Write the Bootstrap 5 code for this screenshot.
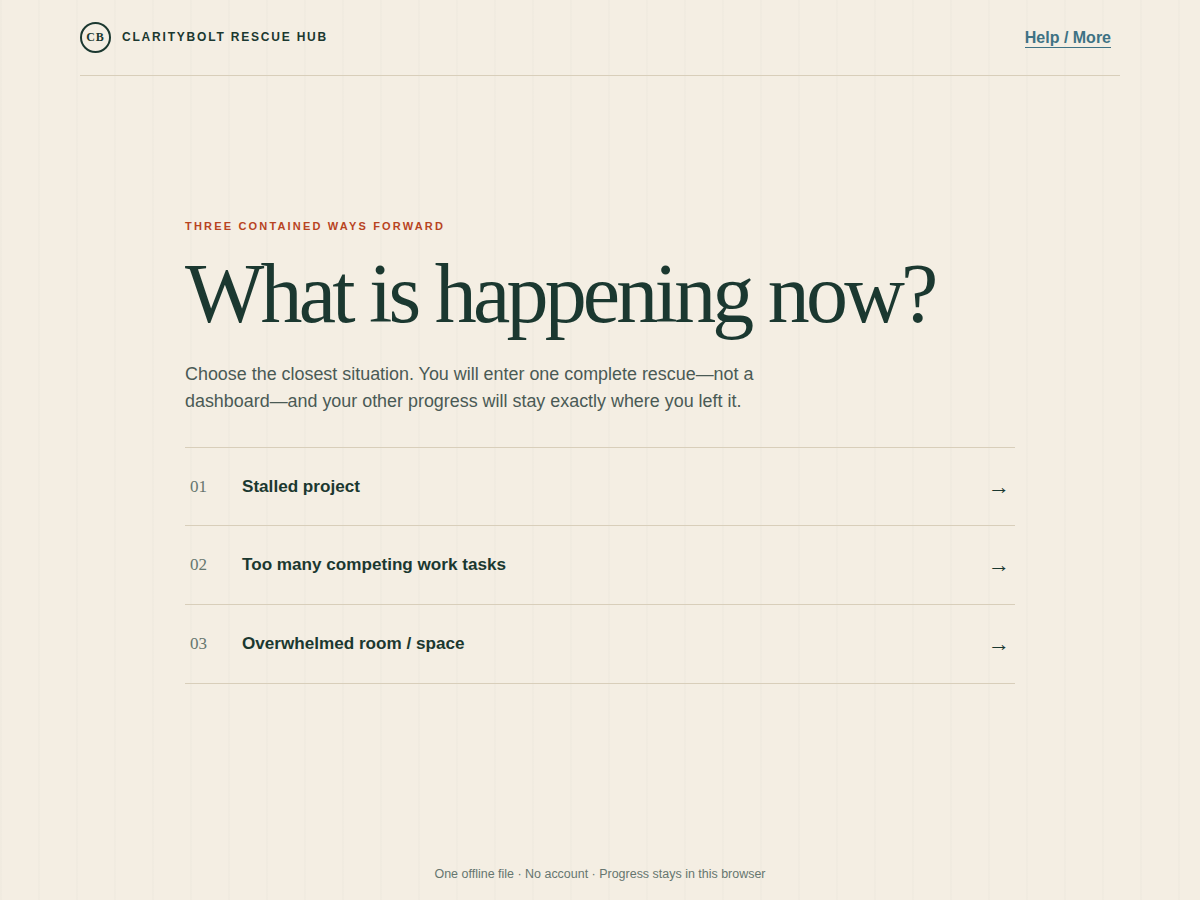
<!DOCTYPE html>
<html lang="en">
<head>
<meta charset="utf-8">
<title>ClarityBolt Rescue Hub</title>
<link href="https://cdn.jsdelivr.net/npm/bootstrap@5.3.0/dist/css/bootstrap.min.css" rel="stylesheet">
<style>
html,body{height:100%}
body{background-color:#f4eee3;background-image:repeating-linear-gradient(90deg,rgba(27,58,50,.016) 0 2px,transparent 2px 38px);font-family:"Liberation Sans",Arial,sans-serif;color:#1b3830}
.shell{height:900px;padding:0 80px;overflow:hidden}
.topbar{height:76px;border-bottom:1px solid #d8ceba;padding-bottom:22px}
.seal{width:31px;height:31px;border:2px solid #1b3830;border-radius:50%;font:700 12px/1 "Liberation Serif",serif;letter-spacing:1px;padding-bottom:2px}
.brandname{font-size:12px;font-weight:700;letter-spacing:1.8px;margin-left:11px;margin-top:-2px}
.helplink{font-size:16px;font-weight:700;color:#3e7284;text-decoration:none;border-bottom:1px solid #3e7284;line-height:18px;margin-right:9px;margin-bottom:5px}
.stage{width:830px;margin:0 auto;padding-top:144px}
.kicker{font-size:11px;font-weight:700;letter-spacing:2.18px;color:#b8441f;line-height:13px;margin-bottom:19px}
.headline{font:400 84px/84px "Liberation Serif",serif;letter-spacing:-3.78px;margin:0 0 25px;color:#1b3830}
.intro{font-size:17.92px;line-height:26.88px;color:#4a5a55;margin:0 0 32px;max-width:620px}
.rescue{border-top:1px solid #d8ceba}
.rescue-row{height:78.67px;border-bottom:1px solid #d8ceba;padding:0 5px;color:#1b3830;text-decoration:none}
.rowno{font:400 17px/1 "Liberation Serif",serif;color:#66766f;width:52px;margin-top:-1px}
.rowlabel{font-size:17.12px;font-weight:700;margin-top:-.34px}
.rowarrow{font:400 22px/1 "Liberation Serif",serif;margin-left:auto}
.foot{position:absolute;left:0;right:0;top:867px;text-align:center;font-size:12.48px;line-height:15px;color:#66766f}
</style>
</head>
<body>
<div class="shell">
  <header class="topbar d-flex justify-content-between align-items-end">
    <div class="d-flex align-items-center">
      <span class="seal d-flex align-items-center justify-content-center">CB</span>
      <span class="brandname">CLARITYBOLT RESCUE HUB</span>
    </div>
    <a class="helplink" href="#">Help / More</a>
  </header>
  <main class="stage">
    <div class="kicker">THREE CONTAINED WAYS FORWARD</div>
    <h1 class="headline">What is happening now?</h1>
    <p class="intro">Choose the closest situation. You will enter one complete rescue—not a dashboard—and your other progress will stay exactly where you left it.</p>
    <div class="rescue">
      <a class="rescue-row d-flex align-items-center" href="#"><span class="rowno">01</span><span class="rowlabel">Stalled project</span><span class="rowarrow">→</span></a>
      <a class="rescue-row d-flex align-items-center" href="#"><span class="rowno">02</span><span class="rowlabel">Too many competing work tasks</span><span class="rowarrow">→</span></a>
      <a class="rescue-row d-flex align-items-center" href="#"><span class="rowno">03</span><span class="rowlabel">Overwhelmed room / space</span><span class="rowarrow">→</span></a>
    </div>
  </main>
  <footer class="foot">One offline file · No account · Progress stays in this browser</footer>
</div>
<script src="https://cdn.jsdelivr.net/npm/bootstrap@5.3.0/dist/js/bootstrap.bundle.min.js"></script>
</body>
</html>
